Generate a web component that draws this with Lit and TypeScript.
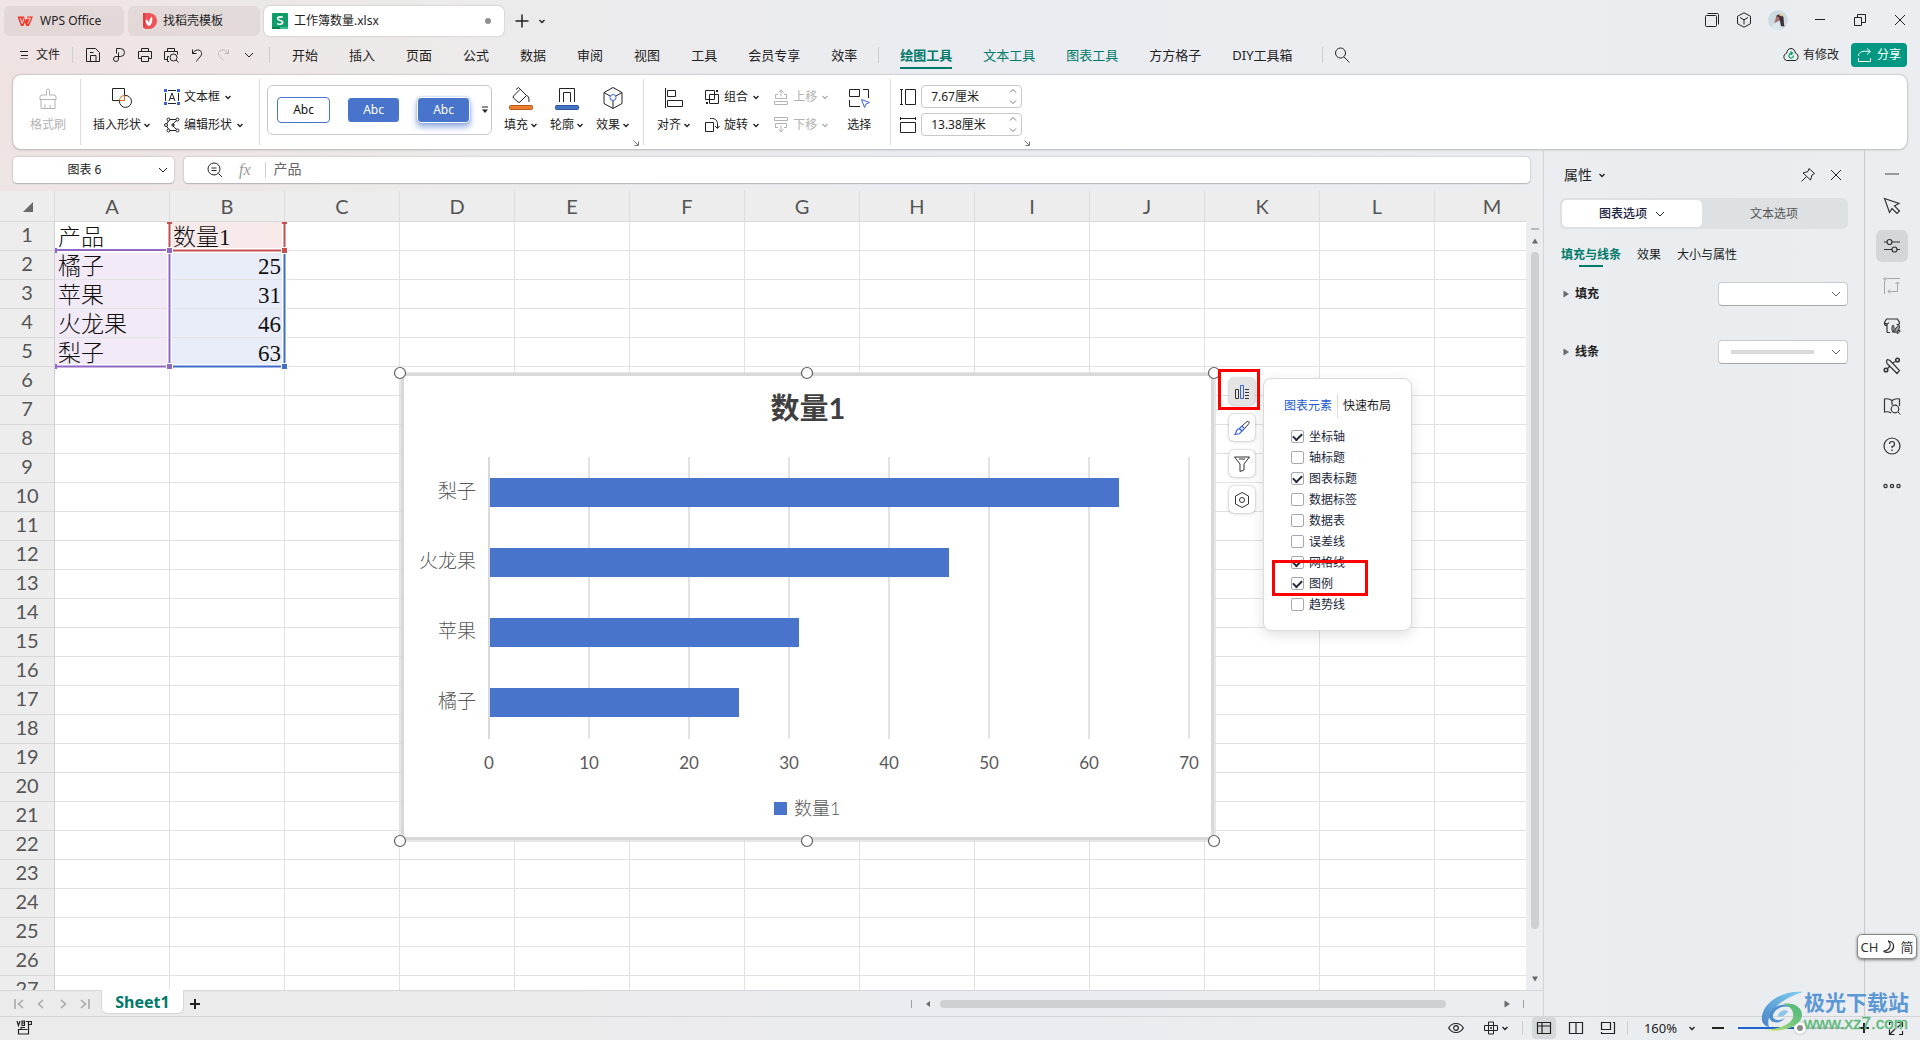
import { LitElement, html, css, svg, nothing } from "lit";
import { customElement, property, state } from "lit/decorators.js";
import { classMap } from "lit/directives/class-map.js";
import { styleMap } from "lit/directives/style-map.js";

/* ---------- icons ---------- */

const ICONS: Record<string, { box: number; body: unknown }> = {
  wps: { box: 16, body: svg`<path d="M0.5 3.5H7L8.6 8 10.4 3.5H16L12 13H9.4L7.8 9.4 6.4 13H4Z" fill="#f0382b" stroke="none"/><path d="M3.4 5.2 5.2 10.6 7 5.2M8.8 5.2H13.4L10.8 10.6" stroke="#f6e6e4" stroke-width="1"/>` },
  docer: { box: 16, body: svg`<path d="M2 0H8A8 8 0 0 1 8 16H5A3 3 0 0 1 2 13Z" fill="#ee5457" stroke="none"/><path d="M2 0H4V14L2.6 14.6Z" fill="#d83c40" stroke="none"/><path d="M8 13C4.500 11 4.500 8 5 6.500 7 7.500 8 9 8.200 10.500 8 7.500 9 5 11 3.500 11.500 6.500 11.800 11 8 13Z" fill="#fff" stroke="none"/>` },
  sheet: { box: 16, body: svg`<rect width="16" height="16" rx="1" fill="#0f9d6b" stroke="none"/><path d="M0 14H8V16H0Z" fill="#0a7f55" stroke="none"/><path d="M8 14H16V16H8Z" fill="#35c28c" stroke="none"/><path d="M10.700 4.600C10 3.600 5.700 3.300 5.700 5.700 5.700 8 10.700 6.800 10.700 9.300 10.700 11.800 6 11.500 5.300 10.300" stroke="#fff" stroke-width="1.600"/>` },
  plus: { box: 16, body: svg`<path d="M8 1.500V14.500M1.500 8H14.500" stroke-width="1.500"/>` },
  plusBold: { box: 12, body: svg`<path d="M6 1V11M1 6H11" stroke-width="2"/>` },
  minusBold: { box: 12, body: svg`<path d="M0 6H12" stroke-width="2"/>` },
  chev: { box: 8, body: svg`<path d="M1.500 3 4 5.500 6.500 3" stroke-width="1.400"/>` },
  spinUp: { box: 8, body: svg`<path d="M1 5.500 4 2.500 7 5.500" stroke="#777"/>` },
  spinDown: { box: 8, body: svg`<path d="M1 2.500 4 5.500 7 2.500" stroke="#777"/>` },
  chevThin: { box: 10, body: svg`<path d="M1 3 5 7 9 3"/>` },
  burger: { box: 8, body: svg`<path d="M0 0.500H8M1 4.500H8M0 8H8"/>` },
  save: { box: 16, body: svg`<path d="M1.500 14.500V1.500H10.500L14.500 5.500V14.500ZM5.500 14V8.500H11V14M5 5.500H8.500"/>` },
  pdf: { box: 16, body: svg`<path d="M5.500 6.500V1.500H9.500A4 4 0 0 1 9.500 9.500H5A2.500 2.500 0 1 0 7.500 12V5.500"/>` },
  print: { box: 16, body: svg`<path d="M4.500 4.500V1.500H11.500V4.500M4 11.500H1.500V4.500H14.500V11.500H12M4.500 9.500H11.500V14.500H4.500Z"/>` },
  preview: { box: 16, body: svg`<path d="M4.500 4.500V1.500H11.500V4.500M4 12.500H1.500V4.500H14.500V7.500M6 14.500H4.500V9.500H6"/><circle cx="10.500" cy="10.500" r="3.500"/><path d="M13 13 15.500 15.500"/>` },
  undo: { box: 16, body: svg`<path d="M3.500 2.500V6.500H7.500M3.500 6.500C6 2 11.500 2 12.500 5.500 13.500 9 9 11 7.500 14.500"/>` },
  redo: { box: 16, body: svg`<path d="M13.500 2.500V6.500H9.500M13.500 6.500C11 2 5 2 3.500 5.500 3 9 6 10.500 8.500 13.500" stroke="#b9b9bb"/>` },
  search: { box: 16, body: svg`<circle cx="6.500" cy="6" r="5"/><path d="M10 10 15.500 15.500"/>` },
  windows: { box: 16, body: svg`<rect x="1.500" y="3.500" width="11" height="11" rx="1"/><path d="M3.500 1.500H13.500A1 1 0 0 1 14.500 2.500V12.500"/>` },
  cube: { box: 16, body: svg`<path d="M8 0.800 14.500 4.300V11.700L8 15.200 1.500 11.700V4.300ZM4 5.500 8 7.800 12 5.500M8 7.800V12.500"/>` },
  min: { box: 16, body: svg`<path d="M3 7.500H13"/>` },
  restore: { box: 16, body: svg`<path d="M2.500 5.500H9.500V13.500H2.500ZM5.500 5V2.500H13.500V10.500H10"/>` },
  close: { box: 16, body: svg`<path d="M3 3 13 13M13 3 3 13"/>` },
  cloud: { box: 16, body: svg`<path d="M8 1.500C11 1.500 12 4 12.300 6 14.500 7 15.500 8.500 15 10.800 14.600 12.800 13 13.500 12 13.500H4C3 13.500 1.400 12.800 1 10.800 0.500 8.500 1.500 7 3.700 6 4 4 5 1.500 8 1.500Z"/><path d="M7.500 4.500 9.500 6 7.800 7.800M9.500 6C5.500 5.500 5 10.500 7.500 11 9.500 11.300 10.500 10 10.300 8.500" stroke="#089f6b" stroke-width="1.200"/>` },
  share: { box: 16, body: svg`<path d="M1.500 9C2 5 5 3.500 12.500 4.500M10 1.500 13.500 4.500 10 7.500M1.500 11V14.500H13.500V11"/>` },
  brush: { box: 24, body: svg`<path d="M10.500 9V4.500A1.500 1.500 0 0 1 13.500 4.500V9H18A2 2 0 0 1 20 11V13.500H4V11A2 2 0 0 1 6 9ZM5 13.500V22.500H19V13.500M9 22V18.500M14 22V19"/>` },
  shapes: { box: 24, body: svg`<path d="M2.500 2.500H14.500V14.500H2.500Z"/><path d="M14.500 9.500A6 6 0 1 1 9.500 15" /><path d="M14.500 9.500V14.500H9.500A5.500 5.500 0 0 1 14.500 9.500Z" stroke="#e06a1d"/>` },
  textbox: { box: 16, body: svg`<path d="M4 1.500H12M4 14.500H12M1.500 4V12M14.500 4V12"/><path d="M5 12 8 4 11 12M6 9.500H10"/><path d="M0 0H3V3H0ZM13 0H16V3H13ZM0 13H3V16H0ZM13 13H16V16H13Z" fill="#3563e0" stroke="none"/>` },
  editshape: { box: 16, body: svg`<path d="M5.500 2.500H12M4.500 4 2.500 7M2.500 9 4.500 12M5.500 13.500H12M12.500 4C8 6 8 10 12.500 12"/><circle cx="4.500" cy="2.500" r="1.500"/><circle cx="13.500" cy="2.500" r="1.500"/><circle cx="2" cy="8" r="1.500"/><circle cx="9" cy="8" r="1.200"/><circle cx="4.500" cy="13.500" r="1.500"/><circle cx="13.500" cy="13.500" r="1.500"/>` },
  bucket: { box: 24, body: svg`<path d="M7 3.500 9.500 1.500 17.500 9.500 11 16A1.500 1.500 0 0 1 9 16L4.500 12A1.500 1.500 0 0 1 4.500 10L11 3.500M17.500 9.500C20 10 20 13 20 16"/><rect x="0.500" y="19.500" width="23" height="4" rx="1" fill="#ed7d31" stroke="#b85c1b"/>` },
  outline: { box: 24, body: svg`<path d="M4.500 16V2.500H19.500V16M8.500 16V6.500H15.500V16"/><rect x="0.500" y="19.500" width="23" height="4" rx="1" fill="#4472c4" stroke="#2f5597"/>` },
  effect: { box: 24, body: svg`<path d="M12 1.500 21 6.500V17.500L12 22.500 3 17.500V6.500ZM3 6.500 9 10M21 6.500 15 10M12 14.500V22.500"/><circle cx="12" cy="11.500" r="3" stroke="#3563e0"/>` },
  align: { box: 24, body: svg`<path d="M3.500 2V22M5.500 4.500H13.500V10.500H5.500ZM5.500 14.500H20.500V20.500H5.500Z"/>` },
  group: { box: 16, body: svg`<path d="M1.500 1.500H10.500V10.500H1.500ZM5.500 5.500H14.500V14.500H5.500Z"/><path d="M12 1H14V3H12ZM2 13H4V15H2Z" fill="currentColor" stroke="none"/>` },
  rotate: { box: 16, body: svg`<path d="M1.500 5.500H9.500V14.500H1.500ZM6 1.500C10 1 13.500 2.500 13.500 7V11M11 9 13.500 11.500 15.500 9"/>` },
  up: { box: 16, body: svg`<path d="M8 7.500V1M5.500 3.500 8 1 10.500 3.500M5 5.500H2.500V9.500H13.500V5.500H11M1.500 12.500H14.500V15.500H1.500Z"/>` },
  down: { box: 16, body: svg`<path d="M8 8.500V15M5.500 12.500 8 15 10.500 12.500M5 10.500H2.500V6.500H13.500V10.500H11M1.500 0.500H14.500V3.500H1.500Z"/>` },
  select: { box: 24, body: svg`<path d="M2.500 10.500V3.500H12.500V10.500ZM16 3.500H21.500V12M2.500 14V20.500H13"/><path d="M14.500 13.500 22.500 16.500 19 18 17.500 21.500Z" stroke="#3563e0"/>` },
  heightIc: { box: 16, body: svg`<path d="M1.500 0V16M0 0.500H3M0 15.500H3M5.500 0.500H15.500V15.500H5.500Z"/>` },
  widthIc: { box: 16, body: svg`<path d="M0 1.500H16M0.500 0V3M15.500 0V3M0.500 5.500H15.500V15.500H0.500Z"/>` },
  launcher: { box: 8, body: svg`<path d="M1.500 1.500 6 6M6.500 2.500V6.500H2.500" stroke="#777"/>` },
  more: { box: 8, body: svg`<path d="M1 1H7" /><path d="M1 3.500H7L4 7Z" fill="currentColor" stroke="none"/>` },
  zoomOut: { box: 16, body: svg`<circle cx="7" cy="7" r="6"/><path d="M4.500 6H9.500M4.500 8.500H9.500M11.500 11.500 15 15"/>` },
  corner: { box: 12, body: svg`<path d="M11 1V11H1Z" fill="#6a6a6a" stroke="none"/>` },
  pin: { box: 16, body: svg`<path d="M9 1.500 14.500 6.500 12 8 10.500 13 3 6 8 4.500ZM6.500 9.500 1.500 14.500"/>` },
  cursor: { box: 18, body: svg`<path d="M1.500 1.500 16 6.500 11.500 9 16.500 14 14 16.500 9 11.500 6.500 15.500Z" stroke-width="1.200"/>` },
  sliders: { box: 18, body: svg`<path d="M1 5H4M9 5H17M1 12.500H9M14 12.500H17" stroke-width="1.200"/><circle cx="6.500" cy="5" r="2.500" stroke-width="1.200"/><circle cx="11.500" cy="12.500" r="2.500" stroke-width="1.200"/>` },
  crop: { box: 18, body: svg`<g stroke="#a3a8ab"><path d="M4 1.500H17M1.500 4V17M5 14.500H14.500V5M12.500 7 14.500 5 16.500 7M7 12.500 5 14.500 7 16.500"/><path d="M1 1H3V3H1Z"/></g>` },
  gallery: { box: 18, body: svg`<path d="M4 15.500H7M4 15.500V8C2 9 1 7.500 1.500 5.500L3.500 2H14.500L16.500 5.500C16.500 7 15.500 8 13.500 7.500M1.500 6C3 7.500 5 7 6 5.500" stroke-width="1.200"/><path d="M10 8C8.500 10 8.500 13 10 15.500 11.500 13 11.500 10 10 8ZM16.500 8.500C13 9.500 12 12 11.500 15.500 15 15.500 16.500 12 16.500 8.500ZM17 13C15 13 14 15 14 16.500 16 16 17 15 17 13Z" fill="currentColor" fill-opacity=".4"/>` },
  tools: { box: 18, body: svg`<path d="M4.500 2.500 7 3.500 16.500 13.500 14 16.500 4 6.500 3.500 4ZM9.500 6 12.500 4.500M4.500 11.500 6.500 9.500" stroke-width="1.200"/><circle cx="14.500" cy="3" r="1.800" stroke-width="1.500"/><circle cx="3" cy="13" r="1.800" stroke-width="1.500"/>` },
  book: { box: 18, body: svg`<path d="M8 16C6 14.500 4 14.500 1.500 15V2C4 1.500 7 2 9 3.500 11 2 14 1.500 16.500 2V9M9 3.500V8" stroke-width="1.200"/><circle cx="12" cy="12" r="3.800" stroke-width="1.200"/><path d="M15 15 17.500 17.500"/>` },
  help: { box: 18, body: svg`<circle cx="9" cy="9" r="8" stroke-width="1.200"/><path d="M6.500 7A2.500 2.500 0 1 1 9 9.500V11" stroke-width="1.200"/><path d="M8.300 12.500H9.700V14H8.300Z" fill="currentColor" stroke="none"/>` },
  dots: { box: 18, body: svg`<g stroke-width="1.300"><circle cx="2.500" cy="9" r="1.600"/><circle cx="9" cy="9" r="1.600"/><circle cx="15.500" cy="9" r="1.600"/></g>` },
  chartEl: { box: 16, body: svg`<path d="M1.500 5.500H4.500V14.500H1.500ZM11 5.500H15M11 8.500H15M11 11.500H15M11 14.500H15"/><path d="M6.500 1.500H9.500V14.500H6.500Z" stroke="#3563e0"/>` },
  paint: { box: 16, body: svg`<path d="M8 6 13 1.500A1.500 1.500 0 0 1 15 3.500L10.500 8.500Z"/><path d="M1 14.500C2.500 13.500 1.500 11 3.500 9.500 6 8 8 10 7 12 5.500 14.500 3 14.500 1 14.500ZM5 9 8 6 10.500 8.500 7.500 11.500" stroke="#3563e0" stroke-width="1.200"/>` },
  funnel: { box: 16, body: svg`<path d="M0.500 1H15.500L10 8V14L6 15.500V8ZM5 3H11"/>` },
  hex: { box: 16, body: svg`<path d="M8 0.500 14.500 4V12L8 15.500 1.500 12V4Z"/><circle cx="8" cy="8" r="2.500"/>` },
  first: { box: 10, body: svg`<path d="M1 0V10M9 1 4.500 5 9 9" stroke="#a5a6a8" stroke-width="1.500"/>` },
  prev: { box: 10, body: svg`<path d="M7 1 2.500 5 7 9" stroke="#a5a6a8" stroke-width="1.500"/>` },
  next: { box: 10, body: svg`<path d="M3 1 7.500 5 3 9" stroke="#a5a6a8" stroke-width="1.500"/>` },
  last: { box: 10, body: svg`<path d="M9 0V10M1 1 5.500 5 1 9" stroke="#a5a6a8" stroke-width="1.500"/>` },
  triUp: { box: 8, body: svg`<path d="M4 1.500 7 6.500H1Z" fill="#6a6a6a" stroke="none"/>` },
  triDown: { box: 8, body: svg`<path d="M4 6.500 7 1.500H1Z" fill="#6a6a6a" stroke="none"/>` },
  triRight: { box: 8, body: svg`<path d="M1.500 0.500 7 4 1.500 7.500Z" fill="#6a6a6a" stroke="none"/>` },
  triLeft: { box: 8, body: svg`<path d="M6 1 2 4 6 7Z" fill="#6a6a6a" stroke="none"/>` },
  macro: { box: 16, body: svg`<path d="M1 1 2.500 5.500 4 1M6 1V5.500H8.500V1ZM6 3H8.500M10 1.500H15.500V4.500H12.500V14H2.500V9.500H11.500M5 9V7.500H9M12.500 4.500V1.500" stroke-width="1.200"/>` },
  eye: { box: 16, body: svg`<path d="M0.700 8C4 2 12 2 15.300 8 12 14 4 14 0.700 8Z" stroke-width="1.200"/><circle cx="8" cy="8" r="2.300" stroke-width="1.200"/>` },
  cross: { box: 16, body: svg`<path d="M5.500 5.500H10.500V10.500H5.500ZM5.500 5.500V2H10.500V5.500M5.500 10.500V14H10.500V10.500M5.500 5.500H1.500V10.500H5.500M10.500 5.500H14.500V10.500H10.500"/><path d="M8 7V9M7 8H9"/>` },
  normal: { box: 16, body: svg`<path d="M1.500 2.500H14.500V13.500H1.500ZM1.500 6H14.500M6 2.500V13.500" stroke-width="1.200"/>` },
  page: { box: 16, body: svg`<path d="M1.500 2.500H14.500V13.500H1.500ZM8 2.500V13.500" stroke-width="1.200"/>` },
  layout: { box: 16, body: svg`<path d="M1.500 2.500H10.500V9.500H1.500ZM14.500 2V13.500H1.500V12M13 2.500H14.500" stroke-width="1.200"/>` },
  full: { box: 16, body: svg`<path d="M9.500 2.500H14.500V7M14 3 9.500 7.500M6.500 14.500H1.500V9.500M2 14 7 9M1.500 5V2.500H5M14.500 11V14.500H11" stroke-width="1.200"/>` },
  moon: { box: 14, body: svg`<path d="M6 1C9 3 9 7 6 9.500 4.500 10.800 3 11 1.500 11M6 1C12 1.500 13 7 10 10.500 7.500 13 3.500 13 1.500 11" stroke-width="1.200"/>` },
};

const icon = (name: string, size?: number) => {
  const { box, body } = ICONS[name];
  const s = size ?? box;
  return html`<svg class="icon" width=${s} height=${s} viewBox="0 0 ${box} ${box}" fill="none" stroke="currentColor" aria-hidden="true">${body}</svg>`;
};

const base = css`
  * { box-sizing: border-box; }
  .icon { display: block; flex: none; }
  button, input, select {
    font: inherit; color: inherit; margin: 0; padding: 0; border: 0; background: none; outline: 0;
  }
  button { display: flex; align-items: center; white-space: nowrap; cursor: pointer; }
  a { color: inherit; text-decoration: none; }
`;

/* ---------- title bar and menu ---------- */

@customElement("app-header")
class AppHeader extends LitElement {
  static styles = [base, css`
    :host { display: block; }
    .title { display: flex; height: 41px; padding: 6px 12px 5px 4px; align-items: stretch; }
    .tab { gap: 6px; border-radius: 6px; background: rgba(80, 50, 50, .07); padding: 0 13px; margin-right: 4px; }
    .tab.home { width: 120px; gap: 7px; }
    .tab.docer { width: 132px; }
    .tab.file { width: 240px; background: #fff; box-shadow: 0 0 2px rgba(0, 0, 0, .25); padding: 0 13px 0 8px; }
    .dirty { width: 6px; height: 6px; border-radius: 50%; background: #8f8f8f; margin-left: auto; }
    .add { margin-left: 6px; gap: 8px; }
    .win { margin-left: auto; display: flex; align-items: center; gap: 24px; padding-bottom: 2px; }
    .tools { display: flex; align-items: center; gap: 16px; }
    .avatar { border-radius: 50%; display: block; }
    .menu { display: flex; height: 30px; padding: 0 13px 2px 20px; align-items: center; }
    .fileBtn { gap: 8px; }
    .rule { width: 1px; height: 16px; background: #cfcfd1; flex: none; }
    .quick { display: flex; gap: 10px; margin: 0 12px; }
    .quick button { width: 16px; justify-content: center; }
    .fileRule { margin-left: 12px; }
    nav { display: flex; align-items: center; gap: 31px; font-size: 13px; margin: 0 29px 0 22px; }
    nav .rule { margin: 0 -10px; }
    nav a { height: 28px; line-height: 28px; color: #222; white-space: nowrap; border-bottom: 2px solid transparent; }
    nav a.ctx { color: #007a69; }
    nav a.on { font-weight: 700; border-bottom-color: #007a69; }
    .find { margin-left: 11px; }
    .right { margin-left: auto; display: flex; align-items: center; gap: 12px; }
    .state { gap: 4px; }
    .share { width: 56px; height: 24px; gap: 4px; justify-content: center; color: #fff; background: #009883; border-radius: 4px; }
  `];

  private menu: Array<[string, string] | null> = [
    ["开始", ""], ["插入", ""], ["页面", ""], ["公式", ""], ["数据", ""], ["审阅", ""], ["视图", ""], ["工具", ""],
    ["会员专享", ""], ["效率", ""], null, ["绘图工具", "ctx on"], ["文本工具", "ctx"], ["图表工具", "ctx"],
    ["方方格子", ""], ["DIY工具箱", ""],
  ];

  render() {
    return html`
      <header class="title">
        <button class="tab home">${icon("wps")}WPS Office</button>
        <button class="tab docer">${icon("docer")}找稻壳模板</button>
        <button class="tab file">${icon("sheet")}工作簿数量.xlsx<i class="dirty"></i></button>
        <button class="add" aria-label="新建">${icon("plus")}${icon("chev")}</button>
        <div class="win">
          <div class="tools">
            <button aria-label="窗口">${icon("windows")}</button>
            <button aria-label="应用">${icon("cube")}</button>
            <svg class="avatar" width="20" height="20" viewBox="0 0 20 20" role="img" aria-label="头像">
              <rect width="20" height="20" fill="#cddbe1"/>
              <path d="M8 6C10 3.500 15 4 15.500 7.500 16 10 15.500 13 16.500 16.500L13 16 12 11 10.500 9Z" fill="#3d3038"/>
              <path d="M8 7C9.500 6 12 7 11.500 9.500 10.500 12 8.500 11.500 6 13 7 11 7.500 9 8 7Z" fill="#a9706a"/>
              <path d="M11.500 4.500 14.500 5.500" stroke="#e8c48e" stroke-width="2"/>
              <path d="M3 20C4 15 7 12.500 10.500 12.500L13 20Z" fill="#dbe9ee"/>
            </svg>
          </div>
          <button aria-label="最小化">${icon("min")}</button>
          <button aria-label="还原">${icon("restore")}</button>
          <button aria-label="关闭">${icon("close")}</button>
        </div>
      </header>
      <div class="menu">
        <button class="fileBtn">${icon("burger")}文件</button>
        <i class="rule fileRule"></i>
        <div class="quick">
          ${[["save", "保存"], ["pdf", "输出"], ["print", "打印"], ["preview", "预览"], ["undo", "撤销"], ["redo", "恢复"], ["chevThin", "更多"]]
            .map(([n, l]) => html`<button aria-label=${l}>${icon(n)}</button>`)}
        </div>
        <i class="rule"></i>
        <nav>${this.menu.map((m) => m ? html`<a href="#" class=${m[1]}>${m[0]}</a>` : html`<i class="rule"></i>`)}</nav>
        <i class="rule"></i>
        <button class="find" aria-label="搜索">${icon("search")}</button>
        <div class="right">
          <button class="state">${icon("cloud")}有修改</button>
          <button class="share">${icon("share")}分享</button>
        </div>
      </div>`;
  }
}

/* ---------- ribbon ---------- */

@customElement("app-ribbon")
class AppRibbon extends LitElement {
  static styles = [base, css`
    :host { display: block; margin: 4px 13px 0; }
    .bar {
      display: flex; height: 74px; background: #fff; border-radius: 8px;
      box-shadow: 0 0 2px rgba(0, 0, 0, .35), 0 1px 3px rgba(0, 0, 0, .12);
    }
    .group { display: flex; position: relative; }
    .group + .group::before { content: ""; position: absolute; left: 0; top: 4px; bottom: 4px; width: 1px; background: #dcdcdc; }
    .group.format { padding: 0 14px 0 17px; }
    .group.shapes { gap: 13px; padding: 0 15px 0 13px; }
    .group.style { gap: 12px; padding: 0 13px 0 8px; }
    .group.order { gap: 13px; padding: 0 19px 0 14px; }
    .group.size { padding: 10px 12px 0 10px; align-items: flex-start; }
    .big { flex-direction: column; align-items: center; gap: 6px; padding-top: 11px; justify-content: flex-start; }
    .label { display: flex; align-items: center; gap: 2px; line-height: 18px; }
    .rows { display: flex; flex-direction: column; gap: 8px; padding-top: 12px; }
    .rows + .rows { padding-right: 5px; }
    .row { height: 20px; gap: 4px; }
    .off { color: #b3b3b3; }
    .gallery {
      display: flex; align-items: center; gap: 17px; width: 225px; height: 50px; margin-top: 10px;
      border: 1px solid #c9c9c9; border-radius: 6px; padding: 0 2px 0 9px;
    }
    .sample { width: 53px; height: 26px; border-radius: 4px; justify-content: center; background: #4874cb; color: #fff; border: 1px solid #fff; }
    .sample.line { background: #fff; color: #111; border: 1px solid #4874cb; }
    .sample.glow { box-shadow: 0 4px 6px rgba(72, 116, 203, .6), 0 0 2px #9db4e2; }
    .gallery .more { margin-left: -6px; }
    .launch { position: absolute; right: 3px; bottom: 2px; }
    .fields { display: grid; grid-template-columns: 16px 101px; gap: 5px; align-items: center; }
    .field { display: flex; align-items: center; height: 23px; border: 1px solid #c9c9c9; border-radius: 4px; padding: 0 4px 0 9px; }
    .field input { flex: 1; min-width: 0; color: #222; }
    .spin { display: flex; flex-direction: column; gap: 3px; }
  `];

  private big(name: string, text: string, arrow = true, off = false) {
    return html`<button class="big ${off ? "off" : ""}">${icon(name)}<span class="label">${text}${arrow ? icon("chev") : nothing}</span></button>`;
  }

  private small(name: string, text: string, off = false) {
    return html`<button class="row ${off ? "off" : ""}">${icon(name)}${text}${icon("chev")}</button>`;
  }

  private field(name: string, text: string, value: string) {
    return html`<label for=${name} aria-label=${text}>${icon(name)}</label>
      <div class="field"><input id=${name} .value=${value} />
        <span class="spin">
          <button aria-label="增加">${icon("spinUp")}</button>
          <button aria-label="减少">${icon("spinDown")}</button>
        </span>
      </div>`;
  }

  render() {
    return html`<div class="bar">
      <div class="group format">${this.big("brush", "格式刷", false, true)}</div>
      <div class="group shapes">
        ${this.big("shapes", "插入形状")}
        <div class="rows">${this.small("textbox", "文本框")}${this.small("editshape", "编辑形状")}</div>
      </div>
      <div class="group style">
        <div class="gallery">
          <button class="sample line">Abc</button>
          <button class="sample">Abc</button>
          <button class="sample glow">Abc</button>
          <button class="more" aria-label="更多样式">${icon("more")}</button>
        </div>
        ${this.big("bucket", "填充")}${this.big("outline", "轮廓")}${this.big("effect", "效果")}
        <button class="launch" aria-label="样式设置">${icon("launcher")}</button>
      </div>
      <div class="group order">
        ${this.big("align", "对齐")}
        <div class="rows">${this.small("group", "组合")}${this.small("rotate", "旋转")}</div>
        <div class="rows">${this.small("up", "上移", true)}${this.small("down", "下移", true)}</div>
        ${this.big("select", "选择", false)}
      </div>
      <div class="group size">
        <div class="fields">
          ${this.field("heightIc", "高度", "7.67厘米")}
          ${this.field("widthIc", "宽度", "13.38厘米")}
        </div>
        <button class="launch" aria-label="大小设置">${icon("launcher")}</button>
      </div>
    </div>`;
  }
}

/* ---------- chart object on the sheet ---------- */

@customElement("bar-chart")
class BarChart extends LitElement {
  @property({ attribute: false }) items: Array<{ name: string; value: number }> = [];

  static styles = css`
    :host { display: block; }
    svg { display: block; overflow: visible; }
    .title { font: 700 29px "Lato", "Noto Sans CJK SC", sans-serif; fill: #404040; }
    .cat { font: 300 19px "Liberation Serif", "Noto Sans CJK SC", serif; fill: #595959; }
    .num { font: 17px "Lato", sans-serif; fill: #595959; }
    .legend { font: 300 18px "Lato", "Noto Sans CJK SC", sans-serif; fill: #595959; }
    .handle { fill: #fff; stroke: #5f6062; stroke-width: 1.200; }
  `;

  render() {
    const left = 88, top = 84, bottom = 366, unit = 10, row = 70;
    const handles = [[-1, 0], [406, 0], [813, 0], [-1, 468], [406, 468], [813, 468]];
    return html`<svg width="814" height="469" viewBox="0 0 814 469" role="img" aria-label="数量1">
      <rect x="0" y="0" width="814" height="468" fill="#fff" stroke="#cfcfd1"/>
      <rect x="1.500" y="1.500" width="810" height="464" fill="#fff" stroke="#d9d9d9" stroke-width="3"/>
      <text class="title" x="407" y="46" text-anchor="middle">数量1</text>
      ${[0, 10, 20, 30, 40, 50, 60, 70].map((n) => svg`
        <rect x=${left + n * unit - 1} y=${top} width="2" height=${bottom - top} fill=${n ? "#e3e3e3" : "#d9d9d9"}/>
        <text class="num" x=${left + n * unit} y="396" text-anchor="middle">${n}</text>`)}
      ${this.items.map((d, i) => svg`
        <rect x=${left + 1} y=${top + 21 + i * row} width=${d.value * unit - 1} height="29" fill="#4874cb"/>
        <text class="cat" x="75" y=${top + 41 + i * row} text-anchor="end">${d.name}</text>`)}
      <rect x="373" y="429" width="13" height="13" fill="#4874cb"/>
      <text class="legend" x="393" y="442">数量1</text>
      ${handles.map(([x, y]) => svg`<circle class="handle" cx=${x} cy=${y} r="5.500"/>`)}
    </svg>`;
  }
}

/* ---------- worksheet ---------- */

@customElement("app-sheet")
class AppSheet extends LitElement {
  static styles = [base, css`
    :host { display: flex; flex-direction: column; flex: 1; min-width: 0; }
    .formula { display: flex; gap: 10px; padding: 8px 13px 8px 13px; height: 42px; }
    .box { display: flex; align-items: center; height: 26px; background: #fff; border-radius: 4px; box-shadow: 0 0 2px rgba(0, 0, 0, .3), 0 1px 1px rgba(0, 0, 0, .15); }
    .name { width: 161px; padding-right: 6px; }
    .name input { flex: 1; min-width: 0; text-align: center; padding-right: 2px; }
    .fx { flex: 1; padding-left: 23px; }
    .fx i { font: italic 16px "Liberation Serif", serif; color: #999; margin: 0 14px 0 16px; }
    .fx u { width: 1px; height: 16px; background: #d0d0d0; }
    .fx input { flex: 1; padding: 0 0 3px 8px; font-size: 14px; color: #666; }
    .area { flex: 1; min-height: 0; display: flex; background: #ededed; }
    .view { position: relative; flex: 1; min-width: 0; overflow: hidden; }
    table { border-spacing: 0; table-layout: fixed; width: 1550px; }
    th { font: 20px "Lato", sans-serif; color: #555; background: #ededed; padding: 0; border-right: 1px solid #dcdcdc; border-bottom: 1px solid #d9d9d9; }
    thead th { height: 31px; }
    .edge { width: 55px; }
    .edge .icon { margin: 2px 20px 0 auto; }
    tbody tr { height: 29px; }
    tbody th { line-height: 24px; vertical-align: top; border-right-color: #d0d0d0; }
    td { background: #fff; border-right: 1px solid #e2e2e2; border-bottom: 1px solid #e2e2e2; padding: 3px 3px 0 3px; height: 29px; font: 300 23px/25px "Liberation Serif", "Noto Sans CJK SC", serif; color: #111; white-space: nowrap; }
    .series { background: #f8eaea; }
    .cats { background: #f3eaf7; }
    .vals { background: #e8edf9; text-align: right; }
    .marks { position: absolute; left: 0; top: 0; pointer-events: none; }
    bar-chart { position: absolute; left: 401px; top: 182px; }
    .side { position: absolute; left: 1229px; top: 187px; display: flex; flex-direction: column; gap: 9px; }
    .side button { width: 26px; height: 27px; justify-content: center; background: #fff; border-radius: 5px; color: #333; box-shadow: 0 0 2px rgba(0, 0, 0, .3), 0 1px 4px rgba(0, 0, 0, .12); }
    .side button.on { background: #e4e4e4; }
    .pop { position: absolute; left: 1263px; top: 187px; width: 149px; height: 253px; background: #fff; border-radius: 8px; border: 1px solid #dadada; box-shadow: 0 4px 14px rgba(0, 0, 0, .12); padding: 15px 20px 0; color: #222; }
    .popTabs { display: flex; height: 24px; margin-bottom: 8px; }
    .popTabs button { width: 54px; }
    .popTabs button.on { color: #2459cf; }
    .popTabs button + button { border-left: 1px solid #dcdcdc; padding-left: 5px; }
    .opt { display: flex; align-items: center; gap: 5px; height: 21px; margin-left: 7px; color: #23283a; }
    .opt input { appearance: none; width: 13px; height: 13px; border: 1px solid #a5a9b3; border-radius: 2px; display: grid; place-items: center; background: #fff; }
    .opt input:checked::before { content: ""; width: 7px; height: 4px; border: solid #23283a; border-width: 0 0 2px 2px; transform: rotate(-45deg); margin-bottom: 2px; }
    .red { position: absolute; border: 3px solid #fe0000; pointer-events: none; }
    .red.a { left: 1218px; top: 178px; width: 42px; height: 41px; }
    .red.b { left: 1272px; top: 369px; width: 96px; height: 36px; }
    .vbar { width: 17px; display: flex; flex-direction: column; align-items: center; margin-top: 31px; background: #ebedf1; padding: 6px 0 7px; gap: 7px; }
    .vbar .line { width: 8px; height: 2px; background: #b9bbbe; }
    .vbar .thumb { width: 8px; flex: 1; border-radius: 4px; background: #cfd0d3; margin-bottom: 39px; }
    .tabs { display: flex; align-items: center; height: 26px; border-top: 1px solid #d6d7d9; padding-left: 14px; }
    .nav { display: flex; gap: 12px; }
    .sheet { height: 24px; align-self: flex-start; margin: -1px 0 0 11px; width: 83px; justify-content: center; background: #fff; border: 1px solid #d6d7d9; border-top: 0; border-radius: 0 0 6px 6px; color: #007a69; font-size: 16px; font-weight: 700; }
    .addSheet { margin-left: 5px; }
    .hbar { flex: 1; margin-left: 710px; margin-right: 19px; display: flex; align-items: center; }
    .hbar .tick { width: 1px; height: 8px; background: #a0a0a0; }
    .hbar .track { flex: 1; margin: 0 57px 0 8px; height: 8px; border-radius: 4px; background: #cfd0d3; }
    .hbar .icon { margin-left: 12px; }
    .hbar .track + .icon { margin: 0 12px 0 0; }
  `];

  @state() private options: Array<[string, boolean]> = [
    ["坐标轴", true], ["轴标题", false], ["图表标题", true], ["数据标签", false], ["数据表", false],
    ["误差线", false], ["网格线", true], ["图例", true], ["趋势线", false],
  ];

  private data = [
    { name: "橘子", value: 25 }, { name: "苹果", value: 31 }, { name: "火龙果", value: 46 }, { name: "梨子", value: 63 },
  ];

  private cell(r: number, c: number) {
    if (r === 0 && c === 0) return html`<td>产品</td>`;
    if (r === 0 && c === 1) return html`<td class="series">数量1</td>`;
    if (r >= 1 && r <= 4 && c === 0) return html`<td class="cats">${this.data[r - 1].name}</td>`;
    if (r >= 1 && r <= 4 && c === 1) return html`<td class="vals">${this.data[r - 1].value}</td>`;
    return html`<td></td>`;
  }

  private toggle(i: number) {
    this.options = this.options.map((o, k) => (k === i ? [o[0], !o[1]] : o));
  }

  render() {
    const cols = [..."ABCDEFGHIJKLM"];
    return html`
      <div class="formula">
        <div class="box name"><input aria-label="名称框" .value=${"图表 6"} /><button aria-label="展开">${icon("chevThin")}</button></div>
        <div class="box fx">${icon("zoomOut")}<i>fx</i><u></u><input aria-label="编辑栏" .value=${"产品"} /></div>
      </div>
      <div class="area">
        <div class="view">
          <table>
            <thead><tr><th class="edge">${icon("corner")}</th>${cols.map((c) => html`<th scope="col">${c}</th>`)}</tr></thead>
            <tbody>
              ${Array.from({ length: 27 }, (_, r) => html`<tr><th scope="row">${r + 1}</th>${cols.map((_c, c) => this.cell(r, c))}</tr>`)}
            </tbody>
          </table>
          <svg class="marks" width="300" height="190" viewBox="0 0 300 190" fill="none">
            <g stroke="#fff" stroke-width="5"><path d="M169.500 32V59.500H284.500V32M55 59.500H169.500V175.500M284.500 60V175.500H55"/></g>
            <g stroke-width="2">
              <path d="M169.500 32V59.500H284.500V32" stroke="#c44f50"/>
              <path d="M284.500 60V175.500H170" stroke="#416bcb"/>
              <path d="M55 59H169.500V175.500H55" stroke="#9168c4"/>
            </g>
            <g stroke="#fff">
              <path d="M281.500 56.500H287.500V62.500H281.500Z" fill="#c44f50"/>
              <path d="M281.500 172.500H287.500V178.500H281.500Z" fill="#416bcb"/>
              <path d="M166.500 56.500H172.500V62.500H166.500ZM166.500 172.500H172.500V178.500H166.500Z" fill="#9168c4"/>
            </g>
            <path d="M167 31H172V33H167ZM282 31H287V33H282Z" fill="#c44f50"/>
            <path d="M55 57H57V62H55ZM55 173H57V178H55Z" fill="#9168c4"/>
          </svg>
          <bar-chart .items=${[...this.data].reverse()}></bar-chart>
          <div class="side">
            <button class="on" aria-label="图表元素">${icon("chartEl")}</button>
            <button aria-label="图表样式">${icon("paint")}</button>
            <button aria-label="筛选">${icon("funnel")}</button>
            <button aria-label="设置">${icon("hex")}</button>
          </div>
          <div class="pop">
            <div class="popTabs"><button class="on">图表元素</button><button>快速布局</button></div>
            ${this.options.map(([t, on], i) => html`<label class="opt"><input type="checkbox" .checked=${on} @change=${() => this.toggle(i)} />${t}</label>`)}
          </div>
          <div class="red a"></div>
          <div class="red b"></div>
        </div>
        <div class="vbar"><i class="line"></i>${icon("triUp")}<i class="thumb"></i>${icon("triDown")}</div>
      </div>
      <div class="tabs">
        <div class="nav">${[["first", "首个"], ["prev", "上一个"], ["next", "下一个"], ["last", "末个"]].map(([n, l]) => html`<button aria-label=${l}>${icon(n)}</button>`)}</div>
        <button class="sheet">Sheet1</button>
        <button class="addSheet" aria-label="新建工作表">${icon("plusBold")}</button>
        <div class="hbar"><i class="tick"></i>${icon("triLeft")}<i class="track"></i>${icon("triRight")}<i class="tick"></i></div>
      </div>`;
  }
}

/* ---------- property panel ---------- */

@customElement("app-panel")
class AppPanel extends LitElement {
  static styles = [base, css`
    :host { display: flex; flex: none; }
    .panel { width: 321px; border-left: 1px solid #d2d4d7; padding: 14px 16px 0 16px; }
    .head { display: flex; align-items: center; height: 24px; margin-bottom: 11px; padding: 0 4px; font-size: 14px; }
    .head .caption { gap: 6px; margin-right: auto; }
    .head button + button + button { margin-left: 12px; }
    .seg { display: grid; grid-template-columns: 140px 1fr; height: 31px; padding: 2px; background: #dde1e4; border-radius: 6px; }
    .seg button { justify-content: center; color: #555; gap: 8px; border-radius: 5px; }
    .seg button.on { background: #fff; color: #1c2340; font-weight: 500; }
    .tabs { display: flex; gap: 16px; margin: 13px 0 0 1px; height: 25px; }
    .tabs button { position: relative; line-height: 24px; color: #222; }
    .tabs button.on { color: #007a69; font-weight: 700; }
    .tabs button.on::after { content: ""; position: absolute; left: 18px; right: 18px; bottom: 0; height: 2px; background: #007a69; }
    .row { display: flex; align-items: center; gap: 5px; height: 24px; margin-top: 15px; font-weight: 700; padding-left: 2px; }
    .row + .row { margin-top: 34px; }
    .pick { display: grid; width: 130px; height: 24px; margin-left: auto; align-items: center; background: #fff; border: 1px solid #c8cbce; border-bottom-color: #a5a8ab; border-radius: 4px; }
    .pick > * { grid-area: 1 / 1; }
    .pick select { appearance: none; width: 100%; height: 22px; }
    .pick .icon { justify-self: end; margin-right: 6px; color: #666; pointer-events: none; }
    .stroke { width: 83px; height: 4px; background: #d9d9d9; margin-left: 12px; pointer-events: none; }
    .strip { width: 56px; border-left: 1px solid #c9cbcf; display: flex; flex-direction: column; align-items: center; gap: 8px; padding: 17px 1px 0 0; color: #333; }
    .strip button { width: 32px; height: 32px; justify-content: center; border-radius: 6px; }
    .strip button.dash { height: 16px; }
    .dash i { width: 14px; height: 2px; background: #999; }
    .strip button.on { background: #d3d7da; }
  `];

  private pick(label: string, line: boolean) {
    return html`<div class="row">${icon("triRight")}<label for=${label}>${label}</label>
      <div class="pick"><select id=${label}><option></option></select>${line ? html`<i class="stroke"></i>` : nothing}${icon("chevThin")}</div></div>`;
  }

  render() {
    return html`
      <aside class="panel">
        <div class="head">
          <button class="caption">属性${icon("chev")}</button>
          <button aria-label="固定">${icon("pin")}</button>
          <button aria-label="关闭">${icon("close")}</button>
        </div>
        <div class="seg"><button class="on">图表选项${icon("chevThin")}</button><button>文本选项</button></div>
        <div class="tabs"><button class="on">填充与线条</button><button>效果</button><button>大小与属性</button></div>
        ${this.pick("填充", false)}${this.pick("线条", true)}
      </aside>
      <div class="strip">
        <button class="dash" aria-label="收起"><i></i></button>
        ${[["cursor", "选择"], ["sliders", "属性"], ["crop", "裁剪"], ["gallery", "素材"], ["tools", "工具"], ["book", "词典"], ["help", "帮助"], ["dots", "更多"]]
          .map(([n, l]) => html`<button class=${classMap({ on: n === "sliders" })} aria-label=${l}>${icon(n)}</button>`)}
      </div>`;
  }
}

/* ---------- status bar ---------- */

@customElement("app-status")
class AppStatus extends LitElement {
  @state() private zoom = 59;

  static styles = [base, css`
    :host { display: flex; align-items: center; height: 24px; border-top: 1px solid #d2d4d7; padding: 0 16px 1px 16px; }
    .right { margin-left: auto; display: flex; align-items: center; }
    .views { display: flex; align-items: center; gap: 8px; }
    .views button { width: 24px; height: 22px; justify-content: center; border-radius: 4px; }
    .views button.on { background: #d6d9dc; }
    .rule { width: 1px; height: 14px; background: #ccc; margin: 0 9px 0 13px; }
    .views + .rule { margin-left: 7px; }
    .eye { margin-right: 19px; }
    .fit { gap: 2px; }
    .scale { font-size: 13px; gap: 11px; margin: 0 16px 0 7px; }
    .slider { appearance: none; width: 107px; height: 12px; margin: 0 13px 0 14px; }
    .slider::-webkit-slider-runnable-track { height: 2px; background: linear-gradient(90deg, #2060cf var(--fill), #b9bbbe var(--fill)); }
    .slider::-webkit-slider-thumb { appearance: none; width: 12px; height: 12px; margin-top: -5px; border-radius: 50%; background: #8a8a8a; border: 3px solid #fff; box-shadow: 0 0 2px rgba(0, 0, 0, .4); }
    .full { margin-left: 18px; }
  `];

  render() {
    return html`
      <button aria-label="宏">${icon("macro")}</button>
      <div class="right">
        <button class="eye" aria-label="护眼">${icon("eye")}</button>
        <button class="fit" aria-label="阅读模式">${icon("cross")}${icon("chev")}</button>
        <i class="rule"></i>
        <div class="views">
          <button class="on" aria-label="普通视图">${icon("normal")}</button>
          <button aria-label="分页预览">${icon("page")}</button>
          <button aria-label="页面布局">${icon("layout")}</button>
        </div>
        <i class="rule"></i>
        <button class="scale">160%${icon("chev")}</button>
        <button aria-label="缩小">${icon("minusBold")}</button>
        <input class="slider" type="range" aria-label="缩放" .value=${String(this.zoom)} style=${styleMap({ "--fill": `${this.zoom}%` })}
          @input=${(e: Event) => { this.zoom = Number((e.target as HTMLInputElement).value); }} />
        <button aria-label="放大">${icon("plusBold")}</button>
        <button class="full" aria-label="全屏">${icon("full")}</button>
      </div>`;
  }
}

/* ---------- shell ---------- */

@customElement("app-root")
class AppRoot extends LitElement {
  static styles = [base, css`
    :host {
      display: flex; flex-direction: column; position: relative; height: 100vh; overflow: hidden;
      font: 12px/18px "Noto Sans", "Noto Sans CJK SC", sans-serif; color: #222;
      background:
        radial-gradient(520px 220px at 0 90px, #efe2e1, transparent),
        linear-gradient(90deg, #ecebeb 0, #ecebeb 500px, #ebecf1 900px, #ebedf1 1500px, #e9edf0 1700px, #ecedf1);
    }
    .work { flex: 1; min-height: 0; display: flex; }
    .ime { position: absolute; right: 3px; bottom: 81px; display: flex; align-items: center; justify-content: center; gap: 4px; width: 60px; height: 25px; background: #fff; border: 1px solid #888; border-radius: 5px; box-shadow: 0 1px 3px rgba(0, 0, 0, .5); font-size: 13px; color: #333; }
    .mark { position: absolute; right: 11px; bottom: 6px; display: flex; align-items: center; pointer-events: none; }
    .words { display: flex; flex-direction: column; }
    .cn { font-size: 21px; line-height: 24px; font-weight: 700; color: #5b98d4; }
    .url { font: 17px/20px "Liberation Sans", sans-serif; color: #5cb878; -webkit-text-stroke: 1px #5cb87866; }
  `];

  render() {
    return html`
      <app-header></app-header>
      <app-ribbon></app-ribbon>
      <div class="work"><app-sheet></app-sheet><app-panel></app-panel></div>
      <app-status></app-status>
      <div class="ime">CH${icon("moon")}简</div>
      <div class="mark">
        <svg width="43" height="42" viewBox="0 0 43 42" aria-hidden="true">
          <defs>
            <linearGradient id="sky" x1="1" y1="0" x2="0" y2="1"><stop offset="0" stop-color="#7fd0f2"/><stop offset="1" stop-color="#4a84c6"/></linearGradient>
            <linearGradient id="leaf" x1="0" y1="1" x2="1" y2="0"><stop offset="0" stop-color="#d9e66a"/><stop offset="0.500" stop-color="#74c77c"/><stop offset="1" stop-color="#4fb67c"/></linearGradient>
          </defs>
          <path d="M42 1C22 -1 3 11 1 25 0 31 3 35 8 36 4 24 16 9 42 1Z" fill="url(#sky)"/>
          <path d="M31 18C27 13 14 16 12 24 11 29 18 31 24 27 20 33 9 33 8 26 8 16 24 9 31 18Z" fill="#4f8fcf"/>
          <path d="M27 20C23 18 17 21 17 25 20 27 25 24 27 20Z" fill="#8cc4ea"/>
          <path d="M22 13C32 11 41 16 41 24 41 34 24 42 4 39 18 38 31 33 32 26 33 19 29 15 22 13Z" fill="url(#leaf)"/>
        </svg>
        <div class="words"><span class="cn">极光下载站</span><span class="url">www.xz7.com</span></div>
      </div>`;
  }
}
